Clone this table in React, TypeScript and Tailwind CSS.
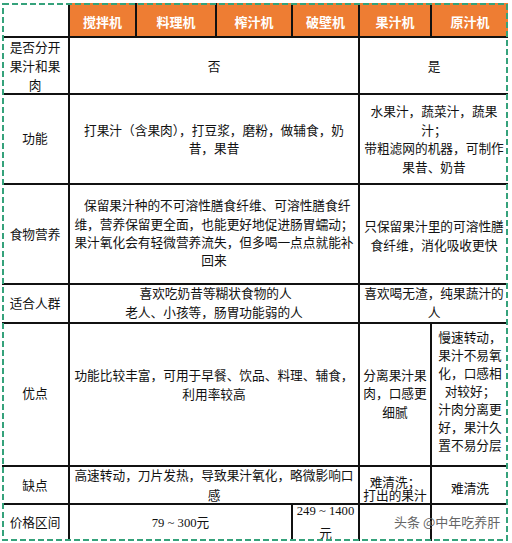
import React from "react";

const body = "font-['Liberation_Serif','Noto_Sans_CJK_SC',serif] text-[12.7px] leading-[18.5px] text-[#111]";
const cell = "bg-white flex flex-col items-center justify-center text-center whitespace-nowrap";

function Lines({ lines, className = "" }: { lines: string[]; className?: string }) {
  return (
    <div className={`shrink-0 ${className}`}>
      {lines.map((l, i) => (
        <React.Fragment key={i}>
          {i > 0 && <br />}
          {l}
        </React.Fragment>
      ))}
    </div>
  );
}

export default function App() {
  const heads = ["搅拌机", "料理机", "榨汁机", "破壁机", "果汁机", "原汁机"];
  return (
    <div className="w-[512px] h-[543px] bg-white relative">
      <div className="relative ml-[2px] mt-[3px] w-[506px] h-[538px]">
        <div
          className={`grid grid-cols-[66px_65px_78px_74px_65px_70px_76px] grid-rows-[33px_55px_88px_98px_37px_141px_36px_36px] gap-[2px] bg-[#111] w-full h-full ${body}`}
        >
          {/* header */}
          <div className="bg-white" />
          {heads.map((h) => (
            <div
              key={h}
              className="bg-[#ee7d33] flex items-center justify-center pt-[5px] text-white font-['Noto_Sans_CJK_SC',sans-serif] font-bold text-[13px]"
            >
              {h}
            </div>
          ))}

          {/* 是否分开 */}
          <div className={`${cell} pt-[3px]`}>
            <Lines className="leading-[19px]" lines={["是否分开", "果汁和果", "肉"]} />
          </div>
          <div className={`${cell} col-span-4 pt-[3px]`}>否</div>
          <div className={`${cell} col-span-2 pt-[3px]`}>是</div>

          {/* 功能 */}
          <div className={cell}>功能</div>
          <div className={`${cell} col-span-4 pt-[2px]`}>
            <Lines lines={["打果汁（含果肉），打豆浆，磨粉，做辅食，奶", "昔，果昔"]} />
          </div>
          <div className={`${cell} col-span-2 pt-[2px]`}>
            <Lines lines={["水果汁，蔬菜汁，蔬果", "汁；", "带粗滤网的机器，可制作", "果昔、奶昔"]} />
          </div>

          {/* 食物营养 */}
          <div className={`${cell} pt-[2px]`}>食物营养</div>
          <div className={`${cell} col-span-4`}>
            <Lines
              className="leading-[18.3px]"
              lines={[
                "\u00a0\u00a0保留果汁种的不可溶性膳食纤维、可溶性膳食纤",
                "维，营养保留更全面，也能更好地促进肠胃蠕动；",
                "果汁氧化会有轻微营养流失，但多喝一点点就能补",
                "回来",
              ]}
            />
          </div>
          <div className={`${cell} col-span-2 pt-[5px]`}>
            <Lines lines={["只保留果汁里的可溶性膳", "食纤维，消化吸收更快"]} />
          </div>

          {/* 适合人群 */}
          <div className={`${cell} pt-[2px]`}>适合人群</div>
          <div className={`${cell} col-span-4`}>
            <Lines lines={["\u00a0喜欢吃奶昔等糊状食物的人", "老人、小孩等，肠胃功能弱的人"]} />
          </div>
          <div className={`${cell} col-span-2`}>
            <Lines lines={["喜欢喝无渣，纯果蔬汁的", "人"]} />
          </div>

          {/* 优点 */}
          <div className={cell}>优点</div>
          <div className={`${cell} col-span-4 pb-[18px]`}>
            <Lines lines={["功能比较丰富，可用于早餐、饮品、料理、辅食，", "利用率较高"]} />
          </div>
          <div className={cell}>
            <Lines lines={["分离果汁果", "肉，口感更", "细腻"]} />
          </div>
          <div className={`${cell} pb-[6px]`}>
            <Lines
              className="leading-[18px]"
              lines={["慢速转动，", "果汁不易氧", "化，口感相", "对较好；", "汁肉分离更", "好，果汁久", "置不易分层"]}
            />
          </div>

          {/* 缺点 */}
          <div className={`${cell} pt-[3px]`}>缺点</div>
          <div className={`${cell} col-span-4 pt-[2px]`}>
            <Lines className="leading-[20px]" lines={["高速转动，刀片发热，导致果汁氧化，略微影响口", "感"]} />
          </div>
          <div className={`${cell} justify-start pt-[10px]`}>
            <Lines className="leading-[13px]" lines={["难清洗；", "打出的果汁"]} />
          </div>
          <div className={`${cell} pt-[8px]`}>难清洗</div>

          {/* 价格区间 */}
          <div className={cell}>价格区间</div>
          <div className={`${cell} col-span-3`}>79 ~ 300元</div>
          <div className={`${cell} justify-start`}>
            <div className="shrink-0 leading-[12px]">249 ~ 1400</div>
            <div className="shrink-0 leading-[34px]">元</div>
          </div>
          <div className="bg-white" />
          <div className="bg-white" />
        </div>

        {/* watermark */}
        <div className="absolute left-[392px] top-[510px] text-[13px] leading-[18px] text-[#666] font-['Noto_Sans_CJK_SC',sans-serif] whitespace-nowrap pointer-events-none">
          头条 @中年吃养肝
        </div>

        {/* dashed selection border */}
        <svg
          className="absolute inset-0 pointer-events-none"
          width="506"
          height="538"
          viewBox="0 0 506 538"
        >
          <rect
            x="1"
            y="1"
            width="504"
            height="536"
            fill="none"
            stroke="#35a27b"
            strokeWidth="2"
            strokeDasharray="6 3"
          />
        </svg>
      </div>
    </div>
  );
}
